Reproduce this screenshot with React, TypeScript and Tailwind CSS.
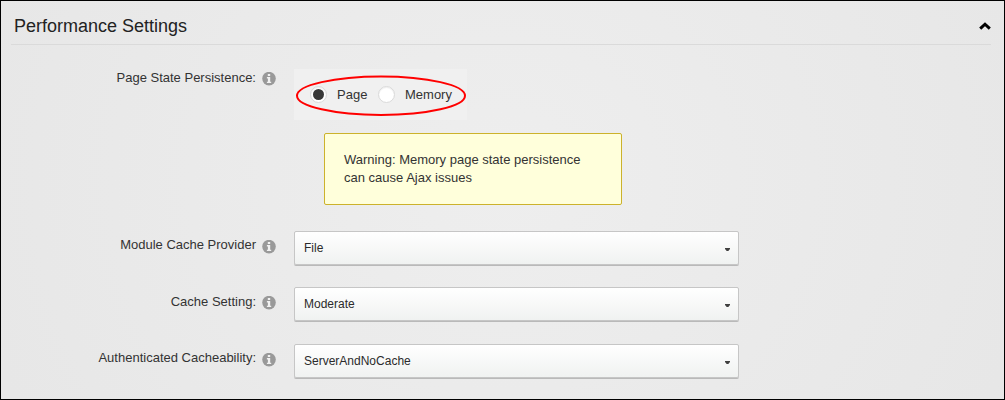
import type { ReactNode } from "react";

function InfoIcon({ className }: { className: string }) {
  return (
    <svg className={`ml-[6px] h-[14px] w-[14px] shrink-0 ${className}`} viewBox="0 0 14 14">
      <circle cx="7" cy="6.6" r="6.8" fill="#999999" />
      <path d="M5.8 2h2.4v1.9H5.8zM4.9 5.1h3.3v4.6h1v1.3H4.9V9.7h1V6.4h-1z" fill="#f1f1f1" />
    </svg>
  );
}

function Label({ text, className, iconClass }: { text: string; className: string; iconClass: string }) {
  return (
    <div className={`flex w-[275px] shrink-0 items-start justify-end ${className}`}>
      <span className="whitespace-nowrap leading-[18px]">{text}</span>
      <InfoIcon className={iconClass} />
    </div>
  );
}

interface RowProps {
  label: string;
  labelClass: string;
  iconClass: string;
  className?: string;
  children: ReactNode;
}

function Row({ label, labelClass, iconClass, className, children }: RowProps) {
  return (
    <div className={`flex items-start gap-[18px] ${className ?? ""}`}>
      <Label text={label} className={labelClass} iconClass={iconClass} />
      {children}
    </div>
  );
}

function Select({ value }: { value: string }) {
  return (
    <button
      type="button"
      className="flex h-[34px] w-[445px] items-center justify-between rounded-[2px] border border-[#c6c6c6] bg-linear-to-b from-white to-[#f0f2f1] pr-[8px] pl-[9px] text-[12px] text-[#2b2b2b] shadow-[0_1px_0_#b9b9b9]"
    >
      <span>{value}</span>
      <svg className="mt-[2px] h-[3px] w-[5px]" viewBox="0 0 5 3">
        <path d="M0 0h5v1L3.3 3H1.7L0 1z" fill="#404040" />
      </svg>
    </button>
  );
}

function Radio({ checked }: { checked?: boolean }) {
  return (
    <span className="flex h-[17px] w-[17px] items-center justify-center rounded-full border border-[#dadada] bg-white shadow-[inset_0_1px_1px_#eeeeee]">
      {checked && <span className="h-[11px] w-[11px] rounded-full bg-[#383838]" />}
    </span>
  );
}

export default function App() {
  return (
    <div className="h-[400px] w-[1005px] overflow-hidden border border-black bg-[radial-gradient(ellipse_620px_560px_at_500px_180px,#eeeeee,#e6e6e6)] font-['Liberation_Sans',Arial,sans-serif] text-[13px] text-[#333333]">
      <header className="mr-[13px] ml-[10px] flex h-[44px] items-center justify-between border-b border-[#dadada] pt-[7px] pl-[3px]">
        <h2 className="text-[18px] leading-[24px] text-[#222222]">Performance Settings</h2>
        <svg className="h-[8px] w-[12px]" viewBox="0 0 12 8">
          <path d="M1.2 6.6 6 2.2l4.8 4.4" fill="none" stroke="#000000" strokeWidth="3" />
        </svg>
      </header>

      <Row label="Page State Persistence:" labelClass="mt-0" iconClass="mt-[3px]" className="mt-[24px] h-[162px]">
        <div>
          <div className="relative flex h-[51px] w-[173px] items-center bg-[#f0f0f0] pl-[16px]">
            <Radio checked />
            <span className="ml-[10px] w-[41px]">Page</span>
            <Radio />
            <span className="ml-[10px]">Memory</span>
            <svg className="absolute top-[6px] left-px h-[42px] w-[172px]" viewBox="0 0 172 42">
              <ellipse cx="86" cy="20.7" rx="84" ry="19.2" fill="none" stroke="#ff0000" strokeWidth="2" />
            </svg>
          </div>
          <div className="mt-[13px] ml-[30px] h-[72px] w-[298px] rounded-[2px] border border-[#ccb22b] bg-[#ffffdb] pt-[17px] pl-[19px] leading-[18px]">
            Warning: Memory page state persistence
            <br />
            can cause Ajax issues
          </div>
        </div>
      </Row>

      <Row label="Module Cache Provider" labelClass="mt-[5px]" iconClass="mt-[4px]" className="h-[56px]">
        <Select value="File" />
      </Row>
      <Row label="Cache Setting:" labelClass="mt-[6px]" iconClass="mt-[3px]" className="h-[57px]">
        <Select value="Moderate" />
      </Row>
      <Row label="Authenticated Cacheability:" labelClass="mt-[5px]" iconClass="mt-[4px]">
        <Select value="ServerAndNoCache" />
      </Row>
    </div>
  );
}
